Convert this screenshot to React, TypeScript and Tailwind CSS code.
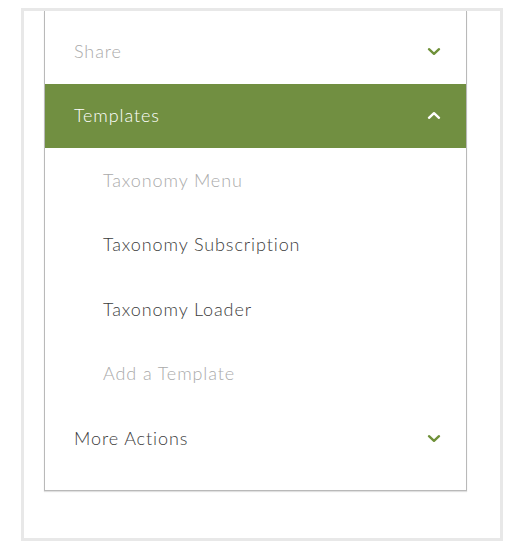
import React from 'react';

type Row = {
  label: string;
  kind: 'header' | 'item';
  tone: 'muted' | 'dark' | 'active';
  chevron?: 'down' | 'up';
};

const rows: Row[] = [
  { label: 'Share', kind: 'header', tone: 'muted', chevron: 'down' },
  { label: 'Templates', kind: 'header', tone: 'active', chevron: 'up' },
  { label: 'Taxonomy Menu', kind: 'item', tone: 'muted' },
  { label: 'Taxonomy Subscription', kind: 'item', tone: 'dark' },
  { label: 'Taxonomy Loader', kind: 'item', tone: 'dark' },
  { label: 'Add a Template', kind: 'item', tone: 'muted' },
  { label: 'More Actions', kind: 'header', tone: 'dark', chevron: 'down' },
];

function Chevron({ dir, className }: { dir: 'down' | 'up'; className: string }) {
  return (
    <svg width="14" height="9" viewBox="0 0 14 9" className={className} fill="none">
      <polyline
        points={dir === 'down' ? '2,2.2 7,6.8 12,2.2' : '2,6.8 7,2.2 12,6.8'}
        stroke="currentColor"
        strokeWidth={2.4}
        strokeLinecap="round"
        strokeLinejoin="round"
      />
    </svg>
  );
}

export default function App() {
  return (
    <div
      className="w-[524px] h-[550px] bg-white pt-[8px] pl-[21px]"
      style={{ fontFamily: 'Lato, "Open Sans", sans-serif' }}
    >
      <div className="w-[482px] h-[533px] border-[3px] border-[#e8e8e8] px-[20px]">
        <div className="w-[423px] border-x border-b border-[#b9b9b9] pt-[8px] pb-[19px] shadow-[0_1px_1px_rgba(0,0,0,0.12)]">
          {rows.map((r) => {
            const color =
              r.tone === 'active'
                ? 'text-white'
                : r.tone === 'muted'
                ? 'text-[#aaaaaa]'
                : 'text-[#3c3c3c]';
            return (
              <div
                key={r.label}
                className={`h-[64.5px] flex items-center justify-between pr-[25px] ${
                  r.kind === 'header' ? 'pl-[29px]' : 'pl-[58px]'
                } ${r.tone === 'active' ? 'bg-[#718f41]' : ''}`}
              >
                <span className={`text-[18px] font-light tracking-[0.9px] ${color}`}>
                  {r.label}
                </span>
                {r.chevron && (
                  <Chevron
                    dir={r.chevron}
                    className={r.tone === 'active' ? 'text-white' : 'text-[#6f9139]'}
                  />
                )}
              </div>
            );
          })}
        </div>
      </div>
    </div>
  );
}
